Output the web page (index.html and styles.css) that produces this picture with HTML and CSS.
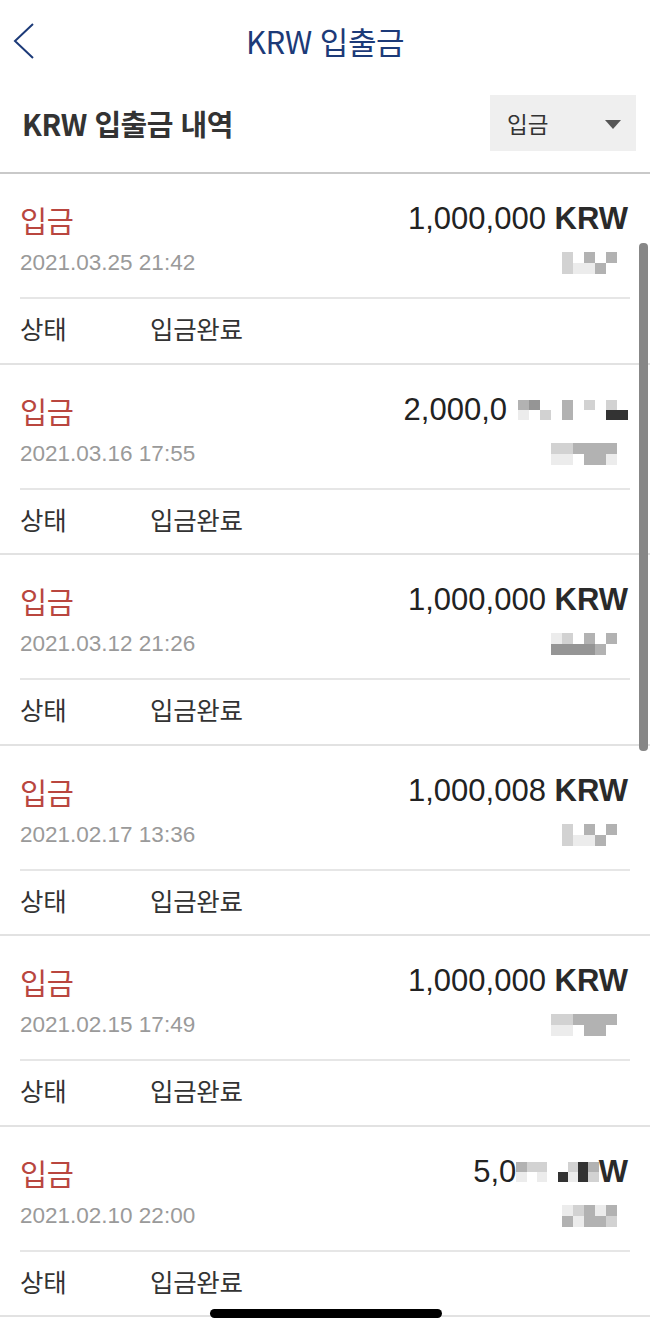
FILE: index.html
```html
<!DOCTYPE html>
<html lang="ko">
<head>
<meta charset="utf-8">
<title>KRW 입출금</title>
<link rel="stylesheet" href="styles.css">
</head>
<body>
<div class="screen">
  <header class="topbar">
    <div class="back">
      <svg width="24" height="38" viewBox="0 0 24 38"><polyline points="21,2 3,19 21,36" fill="none" stroke="#1c3a78" stroke-width="2" stroke-linejoin="miter"/></svg>
    </div>
    <h1 class="title">KRW 입출금</h1>
    <div></div>
  </header>

  <section class="subhead">
    <h2 class="subtitle">KRW 입출금 내역</h2>
    <div class="select"><span>입금</span><i class="caret"></i></div>
  </section>

  <ul class="list">
    <li class="item">
      <div class="row-top"><span class="kind">입금</span><span class="amount">1,000,000 <b>KRW</b></span></div>
      <div class="row-date"><span class="date">2021.03.25 21:42</span>
        <span class="mosaic"><i class="c2"></i><i class="c2"></i><i class="c0"></i><i class="c1"></i><i class="c3"></i><i class="c1"></i><i class="c0"></i><i class="c3"></i><i class="c3"></i><i class="c0"></i></span></div>
      <div class="row-status"><span class="st-label">상태</span><span class="st-value">입금완료</span></div>
    </li>
    <li class="item">
      <div class="row-top"><span class="kind">입금</span><span class="amount">2,000,0<span class="mosaic small"><i class="c0"></i><i class="c0"></i><i class="c3"></i><i class="c1"></i><i class="c4"></i><i class="c0"></i><i class="c0"></i><i class="c2"></i><i class="c0"></i><i class="c0"></i><i class="c3"></i><i class="c3"></i><i class="c0"></i><i class="c0"></i><i class="c2"></i><i class="c0"></i><i class="c0"></i><i class="c0"></i><i class="c2"></i><i class="c5"></i><i class="c0"></i><i class="c5"></i></span></span></div>
      <div class="row-date"><span class="date">2021.03.16 17:55</span>
        <span class="mosaic"><i class="c2"></i><i class="c1"></i><i class="c2"></i><i class="c1"></i><i class="c3"></i><i class="c0"></i><i class="c3"></i><i class="c3"></i><i class="c3"></i><i class="c3"></i><i class="c3"></i><i class="c1"></i></span></div>
      <div class="row-status"><span class="st-label">상태</span><span class="st-value">입금완료</span></div>
    </li>
    <li class="item">
      <div class="row-top"><span class="kind">입금</span><span class="amount">1,000,000 <b>KRW</b></span></div>
      <div class="row-date"><span class="date">2021.03.12 21:26</span>
        <span class="mosaic"><i class="c1"></i><i class="c4"></i><i class="c2"></i><i class="c4"></i><i class="c0"></i><i class="c4"></i><i class="c3"></i><i class="c4"></i><i class="c0"></i><i class="c3"></i><i class="c3"></i><i class="c0"></i></span></div>
      <div class="row-status"><span class="st-label">상태</span><span class="st-value">입금완료</span></div>
    </li>
    <li class="item">
      <div class="row-top"><span class="kind">입금</span><span class="amount">1,000,008 <b>KRW</b></span></div>
      <div class="row-date"><span class="date">2021.02.17 13:36</span>
        <span class="mosaic"><i class="c2"></i><i class="c2"></i><i class="c0"></i><i class="c1"></i><i class="c3"></i><i class="c1"></i><i class="c0"></i><i class="c3"></i><i class="c3"></i><i class="c0"></i></span></div>
      <div class="row-status"><span class="st-label">상태</span><span class="st-value">입금완료</span></div>
    </li>
    <li class="item">
      <div class="row-top"><span class="kind">입금</span><span class="amount">1,000,000 <b>KRW</b></span></div>
      <div class="row-date"><span class="date">2021.02.15 17:49</span>
        <span class="mosaic"><i class="c2"></i><i class="c1"></i><i class="c2"></i><i class="c1"></i><i class="c3"></i><i class="c0"></i><i class="c3"></i><i class="c3"></i><i class="c3"></i><i class="c3"></i><i class="c3"></i><i class="c0"></i></span></div>
      <div class="row-status"><span class="st-label">상태</span><span class="st-value">입금완료</span></div>
    </li>
    <li class="item">
      <div class="row-top"><span class="kind">입금</span><span class="amount">5,0<span class="mosaic small tight"><i class="c3"></i><i class="c1"></i><i class="c2"></i><i class="c0"></i><i class="c2"></i><i class="c1"></i><i class="c0"></i><i class="c0"></i><i class="c0"></i><i class="c5"></i><i class="c2"></i><i class="c1"></i><i class="c5"></i><i class="c5"></i><i class="c3"></i><i class="c2"></i></span><b>W</b></span></div>
      <div class="row-date"><span class="date">2021.02.10 22:00</span>
        <span class="mosaic"><i class="c1"></i><i class="c3"></i><i class="c2"></i><i class="c1"></i><i class="c3"></i><i class="c3"></i><i class="c1"></i><i class="c3"></i><i class="c3"></i><i class="c2"></i></span></div>
      <div class="row-status"><span class="st-label">상태</span><span class="st-value">입금완료</span></div>
    </li>
  </ul>

  <div class="scrollbar"></div>
  <div class="home-indicator"></div>
</div>
</body>
</html>
```

FILE: styles.css
```css
* { box-sizing: border-box; }

html, body {
  margin: 0;
  padding: 0;
  background: #ffffff;
}

body {
  font-family: "Noto Sans CJK KR", "Noto Sans", sans-serif;
  color: #333333;
}

.screen {
  position: relative;
  width: 650px;
  height: 1332px;
  overflow: hidden;
  background: #ffffff;
}

/* top bar */
.topbar {
  height: 82px;
  display: grid;
  grid-template-columns: 80px 1fr 80px;
  align-items: center;
}

.back {
  padding-left: 12px;
  display: flex;
  align-items: center;
}

.back svg { display: block; }

.title {
  margin: 0;
  text-align: center;
  font-size: 31px;
  line-height: 36px;
  font-weight: 400;
  color: #1c3a78;
  letter-spacing: -0.5px;
}

/* sub header */
.subhead {
  height: 92px;
  padding: 13px 14px 21px 22px;
  display: flex;
  align-items: center;
  justify-content: space-between;
  border-bottom: 2px solid #c9c9c9;
}

.subtitle {
  margin: 0;
  font-size: 29px;
  line-height: 34px;
  font-weight: 700;
  color: #333333;
  letter-spacing: -0.5px;
}

.select {
  width: 146px;
  height: 56px;
  background: #efefef;
  display: flex;
  align-items: center;
  justify-content: space-between;
  padding: 0 15px 0 17px;
  font-size: 22.5px;
  color: #333333;
}

.caret {
  width: 0;
  height: 0;
  border-left: 8px solid transparent;
  border-right: 8px solid transparent;
  border-top: 9px solid #555555;
  margin-top: 2px;
}

/* list */
.list {
  list-style: none;
  margin: 0;
  padding: 0;
}

.item {
  height: 190.5px;
  padding: 28px 22px 0 20px;
  border-bottom: 2px solid #e2e2e2;
}

.row-top {
  height: 34px;
  display: flex;
  align-items: center;
  justify-content: space-between;
}

.kind {
  font-size: 29.5px;
  line-height: 34px;
  color: #b9463f;
  letter-spacing: -0.5px;
}

.amount {
  font-family: "Liberation Sans", "Noto Sans", sans-serif;
  font-size: 31px;
  line-height: 34px;
  color: #222222;
  display: inline-flex;
  align-items: center;
  white-space: pre;
}

.amount b { font-weight: 700; color: #2a2a2a; }

.row-date {
  margin-top: 14px;
  height: 26px;
  display: flex;
  align-items: center;
  justify-content: space-between;
  padding-right: 11px;
}

.date {
  font-family: "Liberation Sans", "Noto Sans", sans-serif;
  font-size: 22.5px;
  line-height: 26px;
  color: #9a9a9a;
}

.row-status {
  margin-top: 21px;
  border-top: 2px solid #e6e6e6;
  padding-top: 14px;
  height: 46px;
  display: flex;
  align-items: center;
  font-size: 25.5px;
  line-height: 30px;
  color: #333333;
  margin-right: -2px;
  letter-spacing: -0.3px;
}

.st-label { width: 130px; }

/* pixelated (censored) blocks */
.mosaic {
  display: inline-grid;
  grid-auto-flow: column;
  grid-template-rows: repeat(2, 11px);
  grid-auto-columns: 11px;
}

.mosaic.small {
  grid-template-rows: repeat(2, 10px);
  grid-auto-columns: 11px;
}

.mosaic.small.tight {
  grid-auto-columns: 10.3px;
}

.mosaic i { display: block; }
.mosaic .c0 { background: transparent; }
.mosaic .c1 { background: #ececec; }
.mosaic .c2 { background: #d2d2d2; }
.mosaic .c3 { background: #b2b2b2; }
.mosaic .c4 { background: #959595; }
.mosaic .c5 { background: #333333; }

/* overlays */
.scrollbar {
  position: absolute;
  left: 639px;
  top: 243px;
  width: 9px;
  height: 508px;
  border-radius: 4px;
  background: #878787;
}

.home-indicator {
  position: absolute;
  left: 210px;
  top: 1309px;
  width: 232px;
  height: 9px;
  border-radius: 5px;
  background: #000000;
}
```
